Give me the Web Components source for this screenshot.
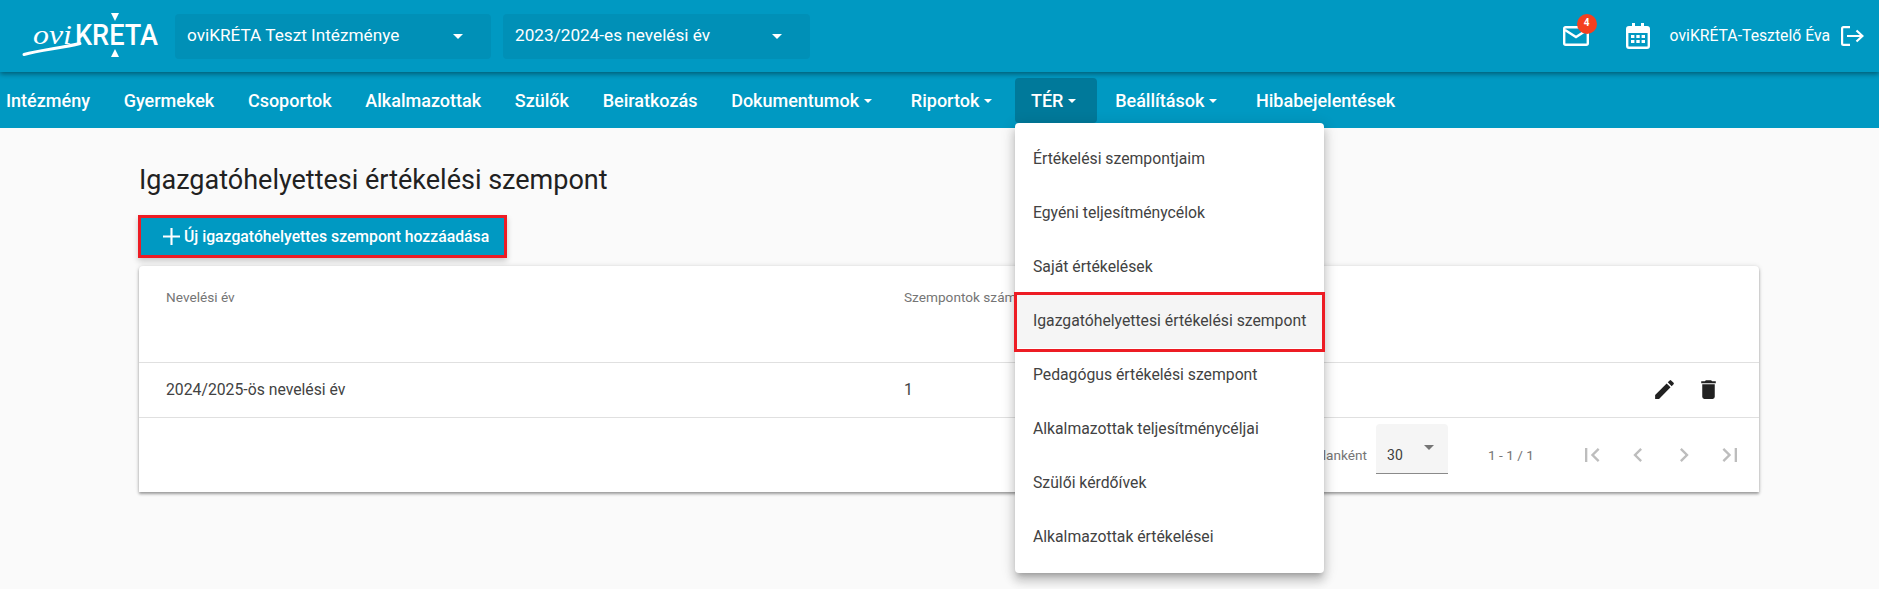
<!DOCTYPE html>
<html lang="hu">
<head>
<meta charset="utf-8">
<title>oviKRÉTA</title>
<style>
html, body { margin: 0; height: 100%; overflow: hidden; }
body { background: #fafafa; font-family: Roboto, "Liberation Sans", sans-serif; color: #212121; }
</style>
</head>
<body>
<app-header>
	<select-box style="width:316px">oviKRÉTA Teszt Intézménye</select-box>
	<select-box style="width:307px">2023/2024-es nevelési év</select-box>
	<span slot="user">oviKRÉTA-Tesztelő Éva</span>
</app-header>
<app-nav>
	<nav-item>Intézmény</nav-item>
	<nav-item>Gyermekek</nav-item>
	<nav-item>Csoportok</nav-item>
	<nav-item>Alkalmazottak</nav-item>
	<nav-item>Szülők</nav-item>
	<nav-item>Beiratkozás</nav-item>
	<nav-item caret>Dokumentumok</nav-item>
	<nav-item caret>Riportok</nav-item>
	<nav-item caret active>TÉR
		<drop-menu slot="menu">
			<menu-item>Értékelési szempontjaim</menu-item>
			<menu-item>Egyéni teljesítménycélok</menu-item>
			<menu-item>Saját értékelések</menu-item>
			<menu-item marked>Igazgatóhelyettesi értékelési szempont</menu-item>
			<menu-item>Pedagógus értékelési szempont</menu-item>
			<menu-item>Alkalmazottak teljesítménycéljai</menu-item>
			<menu-item>Szülői kérdőívek</menu-item>
			<menu-item>Alkalmazottak értékelései</menu-item>
		</drop-menu>
	</nav-item>
	<nav-item caret>Beállítások</nav-item>
	<nav-item>Hibabejelentések</nav-item>
</app-nav>
<page-main>
	<span slot="title">Igazgatóhelyettesi értékelési szempont</span>
	<add-button>Új igazgatóhelyettes szempont hozzáadása</add-button>
	<data-table></data-table>
</page-main>

<script>
const ICONS = {
	mail: `<svg width="26" height="20" viewBox="0 0 26 20" fill="none" stroke="#fff" stroke-width="2.4"><rect x="1.2" y="1.2" width="23.6" height="17.6" rx="1.5"/><path d="M2 4l11 7 11-7"/></svg>`,
	calendar: `<svg width="24" height="26" viewBox="0 0 24 26" fill="#fff"><path d="M3 3h3V0h3v3h6V0h3v3h3a3 3 0 0 1 3 3v17a3 3 0 0 1-3 3H3a3 3 0 0 1-3-3V6a3 3 0 0 1 3-3zm-.6 7v13c0 .4.2.6.6.6h18c.4 0 .6-.2.6-.6V10z"/><path d="M5 12h3.400v3H5zM10.300 12h3.400v3h-3.400zM15.600 12H19v3h-3.400zM5 17h3.400v3H5zM10.300 17h3.400v3h-3.400zM15.600 17H19v3h-3.400z"/></svg>`,
	logout: `<svg width="23" height="20" viewBox="0 0 23 20" fill="none" stroke="#fff" stroke-width="2.2"><path d="M9 1.100H2.500a1.400 1.400 0 0 0-1.400 1.400v15a1.400 1.400 0 0 0 1.400 1.400H9"/><path d="M6 10h15.500M15.500 4.500l6 5.500-6 5.500"/></svg>`,
	edit: `<svg width="25" height="25" viewBox="0 0 24 24" fill="#212121"><path d="M3 17.250V21h3.750L17.810 9.940l-3.750-3.750L3 17.250zM20.710 7.040a1 1 0 0 0 0-1.410l-2.340-2.340a1 1 0 0 0-1.410 0l-1.830 1.830 3.750 3.750 1.830-1.830z"/></svg>`,
	trash: `<svg width="25" height="25" viewBox="0 0 24 24" fill="#212121"><path d="M6 19a2 2 0 0 0 2 2h8a2 2 0 0 0 2-2V7H6v12zM19 4h-3.500l-1-1h-5l-1 1H5v2h14V4z"/></svg>`,
	first: `<svg width="28" height="28" viewBox="0 0 24 24" fill="#bdbdbd"><path d="M18.410 16.590L13.820 12l4.590-4.590L17 6l-6 6 6 6zM6 6h2v12H6z"/></svg>`,
	prev: `<svg width="28" height="28" viewBox="0 0 24 24" fill="#bdbdbd"><path d="M15.410 7.410L14 6l-6 6 6 6 1.410-1.410L10.830 12z"/></svg>`,
	next: `<svg width="28" height="28" viewBox="0 0 24 24" fill="#bdbdbd"><path d="M10 6L8.590 7.410 13.170 12l-4.580 4.590L10 18l6-6z"/></svg>`,
	last: `<svg width="28" height="28" viewBox="0 0 24 24" fill="#bdbdbd"><path d="M5.590 7.410L10.180 12l-4.590 4.590L7 18l6-6-6-6zM16 6h2v12h-2z"/></svg>`,
};

class AppHeader extends HTMLElement {
	constructor() {
		super();
		this.attachShadow({mode:"open"}).innerHTML = `
<style>
:host { display: flex; align-items: center; height: 72px; background: #0099c2; color: #fff; position: relative; z-index: 2; box-shadow: 0 2px 5px rgba(0,0,0,.4); }
.logo { flex: none; width: 175px; height: 72px; position: relative; }
.selects { display: flex; gap: 12px; }
.right { margin-left: auto; display: flex; align-items: center; padding-right: 15px; font-size: 15.75px; }
.mail { position: relative; display: flex; margin-right: 37px; }
.badge { position: absolute; top: -12px; left: 14px; width: 20px; height: 20px; border-radius: 50%; background: #f4401f; font-size: 10px; font-weight: 700; line-height: 18px; text-align: center; }
.cal { display: flex; margin-right: 20px; }
.user { margin-right: 11px; padding-bottom: 2px; }
.logout { display: flex; }
svg { display: block; }
</style>
<div class="logo">
	<svg width="175" height="72" viewBox="0 0 175 72">
		<path d="M24 54.500C40 50 62 48 80 43.500" stroke="#fff" stroke-width="3" fill="none" stroke-linecap="round"/>
		<text x="33" y="44" font-family="'Liberation Serif', serif" font-style="italic" font-size="27" fill="#fff" textLength="39" lengthAdjust="spacingAndGlyphs">ovi</text>
		<text x="75" y="45" font-family="Roboto, sans-serif" font-weight="500" font-size="29.500" fill="#fff" textLength="83" lengthAdjust="spacingAndGlyphs">KRETA</text>
		<path d="M111 13h8l-4 8zM115 49l4 8h-8z" fill="#fff"/>
	</svg>
</div>
<div class="selects"><slot></slot></div>
<div class="right">
	<span class="mail">${ICONS.mail}<span class="badge">4</span></span>
	<span class="cal">${ICONS.calendar}</span>
	<span class="user"><slot name="user"></slot></span>
	<span class="logout">${ICONS.logout}</span>
</div>`;
	}
}

class SelectBox extends HTMLElement {
	constructor() {
		super();
		this.attachShadow({mode:"open"}).innerHTML = `
<style>
:host { display: flex; align-items: center; box-sizing: border-box; height: 45px; padding: 0 28px 0 12px; background: #0090b7; border-radius: 4px; font-size: 17.200px; color: #fff; }
.t { flex: 1; padding-bottom: 2px; }
i { width: 0; height: 0; border: 5px solid transparent; border-top-color: #fff; border-bottom: 0; }
</style>
<span class="t"><slot></slot></span><i></i>`;
	}
}

class AppNav extends HTMLElement {
	constructor() {
		super();
		this.attachShadow({mode:"open"}).innerHTML = `
<style>
:host { display: flex; align-items: flex-start; gap: 1.700px; height: 56px; box-sizing: border-box; padding: 6px 0 0 0; background: #0099c2; position: relative; z-index: 1; }
:host::before { content: ""; margin-left: -11.700px; }
</style>
<slot></slot>`;
	}
}

class NavItem extends HTMLElement {
	constructor() {
		super();
		this.attachShadow({mode:"open"}).innerHTML = `
<style>
:host { display: block; position: relative; font-size: 18px; font-weight: 500; color: #fff; }
.b { display: flex; align-items: center; height: 45px; padding: 0 16px; border-radius: 4px; }
:host([caret]) .b { padding-right: 21px; }
:host([active]) .b { background: #00799a; }
i { display: none; margin-left: 5px; margin-top: 1px; width: 0; height: 0; border: 4px solid transparent; border-top-color: #fff; border-bottom: 0; }
:host([caret]) i { display: block; }
</style>
<div class="b"><slot></slot><i></i></div>
<slot name="menu"></slot>`;
	}
}

class DropMenu extends HTMLElement {
	constructor() {
		super();
		this.attachShadow({mode:"open"}).innerHTML = `
<style>
:host { display: block; position: absolute; top: 45px; left: 0; width: 309px; box-sizing: border-box; padding: 9px 0 9px; background: #fff; border-radius: 4px; box-shadow: 0 5px 5px -3px rgba(0,0,0,.2), 0 8px 10px 1px rgba(0,0,0,.14), 0 3px 14px 2px rgba(0,0,0,.12); }
</style>
<slot></slot>`;
	}
}

class MenuItem extends HTMLElement {
	constructor() {
		super();
		this.attachShadow({mode:"open"}).innerHTML = `
<style>
:host { display: flex; align-items: center; box-sizing: border-box; height: 54px; padding: 0 18px 2px; font-size: 15.750px; font-weight: 400; color: #424242; position: relative; white-space: nowrap; }
:host([marked]) { background: #f5f5f5; }
:host([marked])::after { content: ""; position: absolute; inset: -2px -1px -4px; border: 3px solid #ed1c24; }
</style>
<slot></slot>`;
	}
}

class PageMain extends HTMLElement {
	constructor() {
		super();
		this.attachShadow({mode:"open"}).innerHTML = `
<style>
:host { display: block; padding: 36px 120px 0 139px; }
h1 { margin: 0 0 22px; font-size: 27px; font-weight: 400; line-height: 32px; color: #212121; }
</style>
<h1><slot name="title"></slot></h1>
<slot></slot>`;
	}
}

class AddButton extends HTMLElement {
	constructor() {
		super();
		this.attachShadow({mode:"open"}).innerHTML = `
<style>
:host { display: flex; align-items: center; width: fit-content; height: 37px; padding: 0 15px 0 22px; margin: 0 0 11px 2px; background: #0099c2; color: #fff; font-size: 15.750px; font-weight: 500; outline: 3px solid #ed1c24; box-shadow: 0 3px 6px 3px rgba(0,0,0,.2); }
svg { display: block; margin-right: 4px; }
</style>
<svg width="17" height="17" viewBox="0 0 16 16" fill="#fff"><path d="M7 0h2v7h7v2H9v7H7V9H0V7h7z"/></svg>
<slot></slot>`;
	}
}

class DataTable extends HTMLElement {
	constructor() {
		super();
		this.attachShadow({mode:"open"}).innerHTML = `
<style>
:host { display: block; background: #fff; border-radius: 4px 4px 0 0; box-shadow: 0 2px 3px rgba(0,0,0,.35), 0 0 5px rgba(0,0,0,.12); font-size: 15.750px; }
.grid { display: grid; grid-template-columns: 738px 1fr; padding-left: 27px; align-items: start; }
.head { height: 97px; padding-top: 24px; box-sizing: border-box; color: #757575; font-size: 13.650px; border-bottom: 1px solid #e0e0e0; line-height: 15px; }
.row { height: 55px; align-items: center; border-bottom: 1px solid #e0e0e0; position: relative; color: #424242; box-sizing: border-box; padding-bottom: 2px; }
.acts { position: absolute; right: 38px; top: 14px; display: flex; gap: 19px; }
.foot { height: 74px; display: flex; align-items: flex-start; justify-content: flex-end; padding-right: 15px; color: #757575; font-size: 13.650px; }
.per { margin-right: 9px; margin-top: 29px; }
.sel { width: 72px; height: 50px; box-sizing: border-box; background: #f5f5f5; border-bottom: 1px solid #8a8a8a; border-radius: 4px 4px 0 0; position: relative; color: #3d3d3d; font-size: 14px; padding: 23px 0 0 11px; margin: 6px 40px 0 0; }
.sel i { position: absolute; top: 21px; right: 14px; width: 0; height: 0; border: 5px solid transparent; border-top-color: #757575; border-bottom: 0; }
.count { margin: 29px 44px 0 0; white-space: nowrap; }
.pg { display: flex; gap: 18px; margin-top: 23px; }
svg { display: block; }
</style>
<div class="grid head"><div>Nevelési év</div><div>Szempontok száma</div></div>
<div class="grid row"><div>2024/2025-ös nevelési év</div><div>1</div><div class="acts">${ICONS.edit}${ICONS.trash}</div></div>
<div class="foot">
	<span class="per">Sorok oldalanként</span>
	<div class="sel">30<i></i></div>
	<span class="count">1 - 1 / 1</span>
	<div class="pg">${ICONS.first}${ICONS.prev}${ICONS.next}${ICONS.last}</div>
</div>`;
	}
}

customElements.define("app-header", AppHeader);
customElements.define("select-box", SelectBox);
customElements.define("app-nav", AppNav);
customElements.define("nav-item", NavItem);
customElements.define("drop-menu", DropMenu);
customElements.define("menu-item", MenuItem);
customElements.define("page-main", PageMain);
customElements.define("add-button", AddButton);
customElements.define("data-table", DataTable);
</script>
</body>
</html>
